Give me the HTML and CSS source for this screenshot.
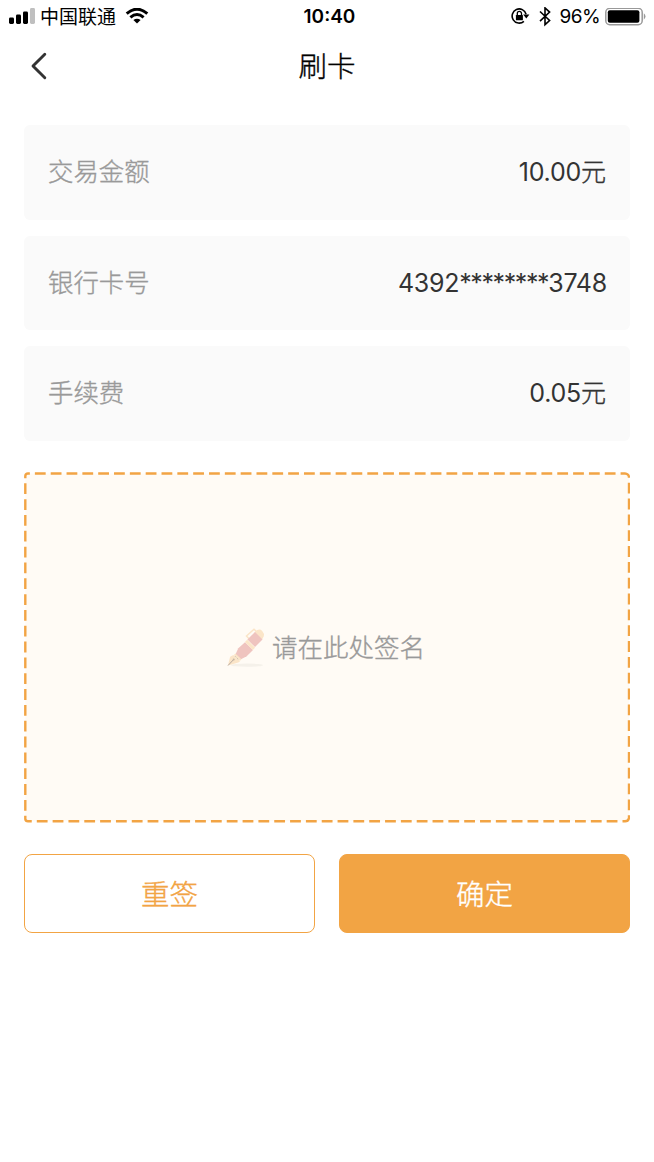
FILE: index.html
```html
<!DOCTYPE html>
<html lang="zh-CN">
<head>
<meta charset="utf-8">
<title>刷卡</title>
<link rel="stylesheet" href="styles.css">
</head>
<body>
<header class="status">
  <div class="status-left">
    <svg class="signal" width="26" height="18" viewBox="0 0 26 18"><rect x="0" y="9.5" width="5" height="6.5" rx="1.4"/><rect x="7" y="6.5" width="5" height="9.5" rx="1.4"/><rect x="14" y="3.5" width="5" height="12.5" rx="1.4"/><rect class="weak" x="21" y="0" width="5" height="16" rx="1.4"/></svg>
    <span class="carrier">中国联通</span>
    <svg class="wifi" width="24" height="18" viewBox="0 0 24 18"><path d="M1.7 5.7Q12 -3.3 22.3 5.7M5.4 9.4Q12 3.6 18.6 9.4" fill="none" stroke="#000" stroke-width="3"/><path d="M8.4 12Q12 9.3 15.6 12L12 15.6Z"/></svg>
  </div>
  <time class="clock">10:40</time>
  <div class="status-right">
    <svg class="lock" width="19" height="18" viewBox="0 0 19 18"><path d="M15.1 6.2A7.1 7.1 0 1 0 12.9 13.4" fill="none" stroke="#000" stroke-width="1.6"/><path d="M12.2 6.6H18.4L15.3 10.4Z"/><rect x="4.9" y="6.9" width="7" height="5.4" rx=".6"/><path d="M6.3 7.2V5.5a2.1 2.1 0 0 1 4.2 0V7.2" fill="none" stroke="#000" stroke-width="1.3"/></svg>
    <svg class="bluetooth" width="12" height="20" viewBox="0 0 12 20"><path d="M1 4.5L10.6 13.5L6 17.7V.9L10.6 5.1L1 14.1" fill="none" stroke="#000" stroke-width="1.6"/></svg>
    <span class="percent">96%</span>
    <svg class="battery" width="42" height="18" viewBox="0 0 42 18"><rect x=".8" y=".3" width="36.4" height="16.4" rx="4" fill="none" stroke="#999" stroke-width="1.5"/><rect x="2.8" y="2.3" width="31.6" height="12.4" rx="2"/><path d="M38.8 5.3Q42.2 8.5 38.8 11.7Z" fill="#999"/></svg>
  </div>
</header>
<nav class="nav">
  <svg class="back" width="18" height="28" viewBox="0 0 18 28"><path d="M14.8 2.3L3 14L14.8 25.7" fill="none" stroke="#333" stroke-width="2.9" stroke-linecap="round" stroke-linejoin="round"/></svg>
  <h1 class="title">刷卡</h1>
</nav>
<main class="content">
  <div class="fields">
    <div class="field"><span class="label">交易金额</span><span class="value">10.00<span class="unit">元</span></span></div>
    <div class="field"><span class="label">银行卡号</span><span class="value card-number">4392<span class="stars">********</span>3748</span></div>
    <div class="field"><span class="label">手续费</span><span class="value">0.05<span class="unit">元</span></span></div>
  </div>
  <section class="signature">
    <svg class="outline" width="606" height="351" viewBox="0 0 606 351"><path d="M1.3 5V4A2.7 2.7 0 0 1 4 1.5H601A4 4 0 0 1 605 5.5V346A4 4 0 0 1 601 349.3H4A2.7 2.7 0 0 1 1.3 347Z" fill="#fffbf5" stroke="#f2a444" stroke-width="2.4" stroke-dasharray="10.8 5.03" stroke-dashoffset="4"/></svg>
    <svg class="pen" width="40" height="42" viewBox="0 0 40 42"><ellipse cx="21" cy="38.2" rx="16" ry="1.6" fill="#f5f1ea"/><path d="M23 11.8L20.5 9L28 2.3L30.5 4.6" fill="none" stroke="#fbe5c8" stroke-width="1.5"/><path d="M28.4 5.5L31.3 3Q34.2 1.7 36.2 4Q38.5 6.5 37.8 9.3L35.8 13Z" fill="#fbe5c8"/><path d="M9.2 28L12.3 21.3L19 15.3L27 23L20.7 29.2L14 32.8Z" fill="#efc4bf"/><path d="M21.4 12.6L29 5L36.5 12.5L29 20.1Z" fill="#efc4bf"/><path d="M18.9 15L21.2 12.8L29.1 20.7L26.8 23Z" fill="#fbe5c8"/><path d="M9.4 26.4L15.4 32.3L13.9 34L7.8 28Z" fill="#fbe5c8"/><path d="M7.3 28L14 34.4L12.2 35.5L2 38.5L4.1 29.8Z" fill="#fbe5c8"/><path d="M2 38.5L7.2 33" stroke="#b8aaa0" stroke-width="1"/><circle cx="7.7" cy="32.6" r="1" fill="#c5b8a5"/><path d="M9 29.2L13 33.2" stroke="#cbbda9" stroke-width="1" stroke-dasharray="1.6 1"/></svg>
    <span class="hint">请在此处签名</span>
  </section>
  <div class="actions">
    <button class="button secondary">重签</button>
    <button class="button primary">确定</button>
  </div>
</main>
</body>
</html>
```
FILE: styles.css
```css
* { box-sizing: border-box; }
body { margin: 0; background: #fff; color: #000; font-family: Inter, "Noto Sans CJK SC", sans-serif; }
svg { display: block; flex: none; }
.status { height: 32px; display: grid; grid-template-columns: 1fr auto 1fr; align-items: center; padding: 1px 7px 0 9px; }
.status-left, .status-right { display: flex; align-items: center; }
.status-right { justify-content: flex-end; }
.signal .weak { fill: #bfbfbf; }
.carrier { margin-left: 5px; padding-top: 2px; font-size: 19px; line-height: 30px; }
.wifi { margin-left: 9px; }
.clock { padding-left: 3px; font-size: 19px; font-weight: 600; line-height: 30px; }
.bluetooth { margin-left: 9px; }
.percent { margin-left: 9px; font-size: 19px; line-height: 30px; letter-spacing: -.6px; }
.battery { margin-left: 5px; }
.nav { height: 68px; display: grid; grid-template-columns: 60px 1fr 60px; align-items: center; }
.back { margin-left: 30px; }
.title { margin: 0; padding-top: 2px; text-align: center; font-size: 28.5px; line-height: 66px; font-weight: 300; -webkit-text-stroke: .35px currentColor; }
.content { padding: 25px 24px 0; }
.fields { display: grid; gap: 16px; }
.field { height: 94.5px; padding: 0 24px; display: flex; align-items: center; justify-content: space-between; border-radius: 6px; background: #fafafa; font-size: 25.4px; line-height: 36px; }
.label { color: #999; font-weight: 300; -webkit-text-stroke: .35px currentColor; }
.value { color: #333; font-size: 25px; letter-spacing: -.25px; }
.unit { font-weight: 300; letter-spacing: 0; -webkit-text-stroke: .35px currentColor; }
.stars { letter-spacing: -1.4px; }
.card-number { margin-right: -1px; }
.signature { height: 351px; margin-top: 31.5px; display: flex; align-items: center; justify-content: center; position: relative; }
.outline { position: absolute; inset: 0; }
.pen { position: relative; }
.hint { position: relative; margin: 0 3px 0 6px; color: #999; font-size: 25.5px; line-height: 36px; font-weight: 300; -webkit-text-stroke: .35px currentColor; }
.actions { margin-top: 31px; display: grid; grid-template-columns: 1fr 1fr; gap: 24px; }
.button { height: 79px; padding: 0 0 3px; border: 1px solid #f2a444; border-radius: 8px; font-family: inherit; font-size: 28.5px; font-weight: 300; -webkit-text-stroke: .35px currentColor; }
.secondary { background: #fff; color: #f2a444; }
.primary { background: #f2a444; color: #fff; }
```
